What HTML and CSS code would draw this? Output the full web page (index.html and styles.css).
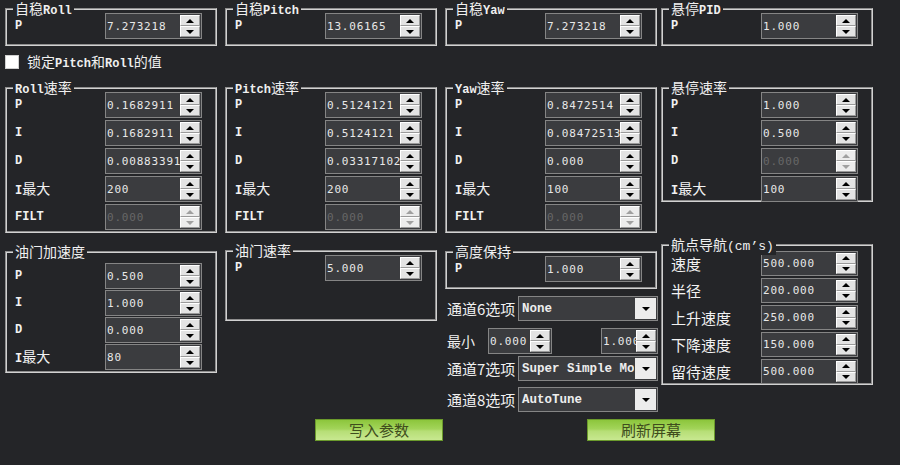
FILE: index.html
```html
<!DOCTYPE html>
<html lang="zh">
<head>
<meta charset="utf-8">
<link rel="stylesheet" href="styles.css">
</head>
<body>
<div class="page">
  <div class="grid top">
    <div class="group h-one">
      <span class="gtitle">自稳<span class="lat">Roll</span></span>
      <div class="field"><span class="lbl lat">P</span><div class="spin"><span class="val">7.273218</span><span class="arrows"><i class="up"></i><i class="dn"></i></span></div></div>
    </div>
    <div class="group h-one">
      <span class="gtitle">自稳<span class="lat">Pitch</span></span>
      <div class="field"><span class="lbl lat">P</span><div class="spin"><span class="val">13.06165</span><span class="arrows"><i class="up"></i><i class="dn"></i></span></div></div>
    </div>
    <div class="group h-one">
      <span class="gtitle">自稳<span class="lat">Yaw</span></span>
      <div class="field"><span class="lbl lat">P</span><div class="spin"><span class="val">7.273218</span><span class="arrows"><i class="up"></i><i class="dn"></i></span></div></div>
    </div>
    <div class="group h-one">
      <span class="gtitle">悬停<span class="lat">PID</span></span>
      <div class="field"><span class="lbl lat">P</span><div class="spin"><span class="val">1.000</span><span class="arrows"><i class="up"></i><i class="dn"></i></span></div></div>
    </div>
  </div>

  <label class="check-row"><span class="box"></span><span class="ctext">锁定<span class="lat">Pitch</span>和<span class="lat">Roll</span>的值</span></label>

  <div class="grid mid">
    <div class="group h-rate">
      <span class="gtitle"><span class="lat">Roll</span>速率</span>
      <div class="field"><span class="lbl lat">P</span><div class="spin"><span class="val">0.1682911</span><span class="arrows"><i class="up"></i><i class="dn"></i></span></div></div>
      <div class="field"><span class="lbl lat">I</span><div class="spin"><span class="val">0.1682911</span><span class="arrows"><i class="up"></i><i class="dn"></i></span></div></div>
      <div class="field"><span class="lbl lat">D</span><div class="spin"><span class="val">0.00883391</span><span class="arrows"><i class="up"></i><i class="dn"></i></span></div></div>
      <div class="field"><span class="lbl"><span class="lat">I</span>最大</span><div class="spin"><span class="val">200</span><span class="arrows"><i class="up"></i><i class="dn"></i></span></div></div>
      <div class="field"><span class="lbl lat">FILT</span><div class="spin off"><span class="val">0.000</span><span class="arrows"><i class="up"></i><i class="dn"></i></span></div></div>
    </div>
    <div class="group h-rate">
      <span class="gtitle"><span class="lat">Pitch</span>速率</span>
      <div class="field"><span class="lbl lat">P</span><div class="spin"><span class="val">0.5124121</span><span class="arrows"><i class="up"></i><i class="dn"></i></span></div></div>
      <div class="field"><span class="lbl lat">I</span><div class="spin"><span class="val">0.5124121</span><span class="arrows"><i class="up"></i><i class="dn"></i></span></div></div>
      <div class="field"><span class="lbl lat">D</span><div class="spin"><span class="val">0.03317102</span><span class="arrows"><i class="up"></i><i class="dn"></i></span></div></div>
      <div class="field"><span class="lbl"><span class="lat">I</span>最大</span><div class="spin"><span class="val">200</span><span class="arrows"><i class="up"></i><i class="dn"></i></span></div></div>
      <div class="field"><span class="lbl lat">FILT</span><div class="spin off"><span class="val">0.000</span><span class="arrows"><i class="up"></i><i class="dn"></i></span></div></div>
    </div>
    <div class="group h-rate">
      <span class="gtitle"><span class="lat">Yaw</span>速率</span>
      <div class="field"><span class="lbl lat">P</span><div class="spin"><span class="val">0.8472514</span><span class="arrows"><i class="up"></i><i class="dn"></i></span></div></div>
      <div class="field"><span class="lbl lat">I</span><div class="spin"><span class="val">0.08472513</span><span class="arrows"><i class="up"></i><i class="dn"></i></span></div></div>
      <div class="field"><span class="lbl lat">D</span><div class="spin"><span class="val">0.000</span><span class="arrows"><i class="up"></i><i class="dn"></i></span></div></div>
      <div class="field"><span class="lbl"><span class="lat">I</span>最大</span><div class="spin"><span class="val">100</span><span class="arrows"><i class="up"></i><i class="dn"></i></span></div></div>
      <div class="field"><span class="lbl lat">FILT</span><div class="spin off"><span class="val">0.000</span><span class="arrows"><i class="up"></i><i class="dn"></i></span></div></div>
    </div>
    <div class="group h-hover">
      <span class="gtitle">悬停速率</span>
      <div class="field"><span class="lbl lat">P</span><div class="spin"><span class="val">1.000</span><span class="arrows"><i class="up"></i><i class="dn"></i></span></div></div>
      <div class="field"><span class="lbl lat">I</span><div class="spin"><span class="val">0.500</span><span class="arrows"><i class="up"></i><i class="dn"></i></span></div></div>
      <div class="field"><span class="lbl lat">D</span><div class="spin off"><span class="val">0.000</span><span class="arrows"><i class="up"></i><i class="dn"></i></span></div></div>
      <div class="field"><span class="lbl"><span class="lat">I</span>最大</span><div class="spin"><span class="val">100</span><span class="arrows"><i class="up"></i><i class="dn"></i></span></div></div>
    </div>
  </div>

  <div class="grid low">
    <div class="group h-thr">
      <span class="gtitle">油门加速度</span>
      <div class="field"><span class="lbl lat">P</span><div class="spin"><span class="val">0.500</span><span class="arrows"><i class="up"></i><i class="dn"></i></span></div></div>
      <div class="field"><span class="lbl lat">I</span><div class="spin"><span class="val">1.000</span><span class="arrows"><i class="up"></i><i class="dn"></i></span></div></div>
      <div class="field"><span class="lbl lat">D</span><div class="spin"><span class="val">0.000</span><span class="arrows"><i class="up"></i><i class="dn"></i></span></div></div>
      <div class="field"><span class="lbl"><span class="lat">I</span>最大</span><div class="spin"><span class="val">80</span><span class="arrows"><i class="up"></i><i class="dn"></i></span></div></div>
    </div>
    <div class="group h-thrrate">
      <span class="gtitle">油门速率</span>
      <div class="field"><span class="lbl lat">P</span><div class="spin"><span class="val">5.000</span><span class="arrows"><i class="up"></i><i class="dn"></i></span></div></div>
    </div>
    <div class="col3">
      <div class="group h-one">
        <span class="gtitle">高度保持</span>
        <div class="field"><span class="lbl lat">P</span><div class="spin"><span class="val">1.000</span><span class="arrows"><i class="up"></i><i class="dn"></i></span></div></div>
      </div>
      <div class="opt ch6"><span class="olbl">通道6选项</span><div class="combo"><span class="cval">None</span><span class="cbtn"></span></div></div>
      <div class="opt minrow"><span class="mlbl">最小</span><div class="spin small-a"><span class="val">0.000</span><span class="arrows"><i class="up"></i><i class="dn"></i></span></div><div class="spin small-b"><span class="val">1.000</span><span class="arrows"><i class="up"></i><i class="dn"></i></span></div></div>
      <div class="opt ch7"><span class="olbl">通道7选项</span><div class="combo"><span class="cval">Super Simple Mode</span><span class="cbtn"></span></div></div>
      <div class="opt ch8"><span class="olbl">通道8选项</span><div class="combo"><span class="cval">AutoTune</span><span class="cbtn"></span></div></div>
    </div>
    <div class="group h-wp tight">
      <span class="gtitle">航点导航<span class="lat thin">(cm’s)</span></span>
      <div class="field"><span class="lbl big">速度</span><div class="spin"><span class="val">500.000</span><span class="arrows"><i class="up"></i><i class="dn"></i></span></div></div>
      <div class="field"><span class="lbl big">半径</span><div class="spin"><span class="val">200.000</span><span class="arrows"><i class="up"></i><i class="dn"></i></span></div></div>
      <div class="field"><span class="lbl big">上升速度</span><div class="spin"><span class="val">250.000</span><span class="arrows"><i class="up"></i><i class="dn"></i></span></div></div>
      <div class="field"><span class="lbl big">下降速度</span><div class="spin"><span class="val">150.000</span><span class="arrows"><i class="up"></i><i class="dn"></i></span></div></div>
      <div class="field"><span class="lbl big">留待速度</span><div class="spin"><span class="val">500.000</span><span class="arrows"><i class="up"></i><i class="dn"></i></span></div></div>
    </div>
  </div>

  <div class="actions">
    <button class="gbtn">写入参数</button>
    <button class="gbtn">刷新屏幕</button>
  </div>
</div>
</body>
</html>
```

FILE: styles.css
```css
html, body {
  margin: 0;
  padding: 0;
}
body {
  background: #242528;
  color: #ececec;
  font-family: "Noto Sans CJK SC", sans-serif;
  font-size: 14px;
  width: 900px;
  height: 465px;
  overflow: hidden;
}
.page {
  padding-left: 5px;
}
.grid {
  display: grid;
  grid-template-columns: 220px 220px 216px 212px;
  align-items: start;
}
.top { margin-top: 8px; }
.mid { margin-top: 18px; }
.low { margin-top: 11px; }

.group {
  position: relative;
  box-sizing: border-box;
  width: 212px;
  border: 1px solid;
  border-color: #8e8e8e #d2d2d2 #d2d2d2 #8e8e8e;
  box-shadow: inset 1px 1px 0 #d2d2d2, inset -1px -1px 0 #8e8e8e;
  padding: 4px 0 0 9px;
  display: flex;
  flex-direction: column;
  gap: 2px;
}
.h-one { height: 38px; }
.h-rate { height: 146px; }
.h-hover { height: 115px; }
.h-thr { height: 122px; margin-top: 7px; padding-top: 11px; gap: 1px; }
.h-thrrate { height: 71px; margin-top: 6px; }
.h-wp { height: 141px; padding-top: 6px; }

.gtitle {
  position: absolute;
  top: -9px;
  left: 7px;
  padding: 0 2px;
  background: #242528;
  line-height: 16px;
  font-size: 14px;
  white-space: nowrap;
  color: #f0f0f0;
}
.lat {
  font-family: "Liberation Mono", monospace;
  font-weight: bold;
  font-size: 12px;
}
.lat.thin { font-weight: normal; font-size: 13px; }

.field {
  display: flex;
  align-items: center;
  height: 26px;
}
.tight .field { height: 25px; }
.tight .spin { height: 25px; }
.lbl {
  width: 90px;
  flex: none;
  line-height: 16px;
  white-space: nowrap;
  color: #f2f2f2;
}
.lbl.big { font-size: 15px; }

.spin {
  box-sizing: border-box;
  width: 97px;
  height: 26px;
  flex: none;
  display: flex;
  border: 1px solid #858585;
  background: #3b3c3f;
}
.val {
  flex: 1;
  min-width: 0;
  overflow: hidden;
  white-space: nowrap;
  padding-left: 1px;
  font-family: "DejaVu Sans Mono", monospace;
  font-size: 11px;
  letter-spacing: 0.8px;
  color: #e8e8e8;
  display: flex;
  align-items: center;
}
.arrows {
  width: 20px;
  flex: none;
  margin: 1px 1px 1px 0;
  display: flex;
  flex-direction: column;
}
.arrows i {
  flex: 1;
  display: flex;
  align-items: center;
  justify-content: center;
  background: #e3e3e3;
  border: 1px solid;
  border-color: #ffffff #9a9a9a #9a9a9a #ffffff;
}
.arrows i::before {
  content: "";
  width: 0;
  height: 0;
  border-left: 4px solid transparent;
  border-right: 4px solid transparent;
}
.arrows .up::before { border-bottom: 4px solid #000; }
.arrows .dn::before { border-top: 4px solid #000; }
.spin.off .val { color: #676767; }
.spin.off .arrows i { background: #ececec; }
.spin.off .arrows .up::before { border-bottom-color: #a0a0a0; }
.spin.off .arrows .dn::before { border-top-color: #a0a0a0; }

.check-row {
  display: flex;
  align-items: center;
  gap: 8px;
  margin-top: 9px;
  height: 14px;
}
.check-row .box {
  width: 14px;
  height: 14px;
  box-sizing: border-box;
  background: #ffffff;
  border: 1px solid #d0d0d0;
}
.ctext {
  font-size: 14px;
  line-height: 16px;
  color: #f0f0f0;
}

.col3 {
  display: flex;
  flex-direction: column;
  margin-top: 7px;
}
.opt {
  display: flex;
  align-items: center;
  padding-left: 2px;
}
.ch6 { margin-top: 7px; }
.minrow { margin-top: 7px; }
.ch7 { margin-top: 2px; }
.ch8 { margin-top: 6px; }
.olbl {
  width: 71px;
  flex: none;
  font-size: 15px;
  line-height: 18px;
  white-space: nowrap;
  color: #f0f0f0;
}
.mlbl {
  width: 41px;
  flex: none;
  font-size: 14px;
  line-height: 18px;
  color: #f0f0f0;
}
.spin.small-a { width: 64px; }
.spin.small-b { width: 57px; margin-left: 49px; }
.combo {
  box-sizing: border-box;
  width: 140px;
  height: 25px;
  display: flex;
  border: 1px solid #858585;
  background: #3b3c3f;
}
.cval {
  flex: 1;
  min-width: 0;
  overflow: hidden;
  white-space: nowrap;
  padding-left: 3px;
  display: flex;
  align-items: center;
  font-family: "Liberation Mono", monospace;
  font-weight: bold;
  font-size: 12.5px;
  color: #eeeeee;
}
.cbtn {
  width: 21px;
  flex: none;
  margin: 1px;
  background: #ececec;
  display: flex;
  align-items: center;
  justify-content: center;
}
.cbtn::before {
  content: "";
  border-left: 4px solid transparent;
  border-right: 4px solid transparent;
  border-top: 4px solid #000;
}

.actions {
  display: flex;
  gap: 144px;
  margin-top: 7px;
  padding-left: 310px;
}
.gbtn {
  box-sizing: border-box;
  width: 128px;
  height: 22px;
  margin: 0;
  padding: 0;
  border: 1px solid #6b9a2c;
  background: linear-gradient(#8cc63c 0%, #a3d45a 45%, #b6de76 55%, #c8e890 100%);
  color: #3f4d1d;
  font-family: "Noto Sans CJK SC", sans-serif;
  font-size: 15px;
  line-height: 20px;
}
```
